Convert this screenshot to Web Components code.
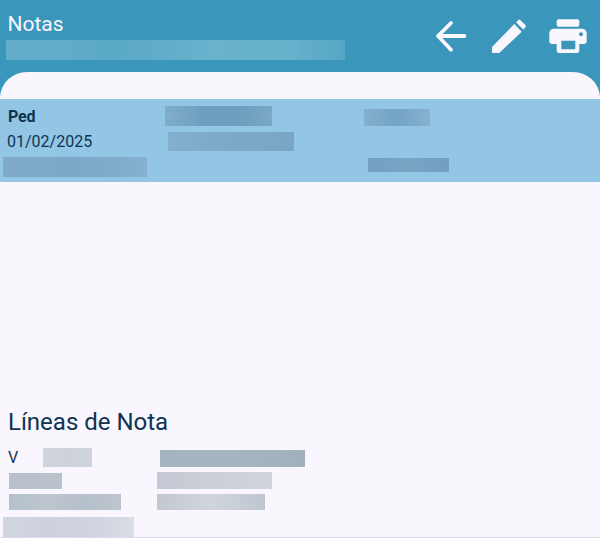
<!DOCTYPE html>
<html lang="es">
<head>
<meta charset="utf-8">
<title>Notas</title>
<style>
  html, body { margin: 0; height: 100%; }
  body { font-family: Roboto, "Liberation Sans", sans-serif; }
</style>
</head>
<body>
<notes-screen>
  <app-header slot="header" title="Notas"></app-header>

  <note-row>
    <row-line>
      <row-text strong style="width:157px;margin:7px 0 0 8px">Ped</row-text>
      <blur-bar w="107" h="20" fill="#82aeca,#6f9fc0,#6e9dbd,#7ba8c6" style="margin-top:7px"></blur-bar>
      <blur-bar w="66" h="17" fill="#84afce,#74a3c4,#87b1d0" style="margin:10px 0 0 92px"></blur-bar>
    </row-line>
    <row-line>
      <row-text style="width:161px;margin:5px 0 0 7px">01/02/2025</row-text>
      <blur-bar w="126" h="19" fill="#84afce,#7ca9c8,#7aa6c5" style="margin-top:6px"></blur-bar>
    </row-line>
    <row-line>
      <blur-bar w="144" h="20" fill="#7fabc9,#7ba8c6,#85b0cf" style="margin:5px 0 0 3px"></blur-bar>
      <blur-bar w="81" h="14" fill="#739fc1,#78a5c4,#729fc0" style="margin:6px 0 0 221px"></blur-bar>
    </row-line>
  </note-row>

  <note-lines slot="footer" title="Líneas de Nota">
    <row-line>
      <row-text style="width:35px;margin:-1px 0 0 8px">V</row-text>
      <blur-bar w="49" h="19" fill="#d0d5dd,#cdd2da,#d0d5dd"></blur-bar>
      <blur-bar w="145" h="17" fill="#a6b3c0,#a7b4c1,#a2afbd" style="margin:2px 0 0 68px"></blur-bar>
    </row-line>
    <row-line>
      <blur-bar w="53" h="16" fill="#b8c1cb,#bac2cc" style="margin:6px 0 0 9px"></blur-bar>
      <blur-bar w="115" h="17" fill="#c4c9d3,#cacfd8,#d0d5dc" style="margin:5px 0 0 95px"></blur-bar>
    </row-line>
    <row-line>
      <blur-bar w="112" h="16" fill="#b4c0ca,#bec6cf,#b6c0ca,#bec5cf" style="margin:5px 0 0 9px"></blur-bar>
      <blur-bar w="108" h="16" fill="#c2c7d1,#d0d5dd,#c0c6d0" style="margin:5px 0 0 36px"></blur-bar>
    </row-line>
    <row-line>
      <blur-bar w="131" h="20" fill="#d2d6e0,#ccd1db,#d0d4de,#dadce6" style="margin:6px 0 0 3px"></blur-bar>
    </row-line>
  </note-lines>
</notes-screen>

<script>
class NotesScreen extends HTMLElement {
  constructor() {
    super();
    this.attachShadow({ mode: "open" }).innerHTML = `
      <style>
        :host { display: flex; flex-direction: column; height: 538px; background: #3a96ba; color: #0e3451; overflow: hidden; }
        .sheet { flex: 1; display: flex; flex-direction: column; padding-top: 27px; background: #f9f6fe; border-radius: 27px 27px 0 0 / 26px 26px 0 0; }
        .spacer { flex: 1; }
      </style>
      <slot name="header"></slot>
      <div class="sheet">
        <slot></slot>
        <div class="spacer"></div>
        <slot name="footer"></slot>
      </div>
    `;
  }
}

class AppHeader extends HTMLElement {
  constructor() {
    super();
    this.attachShadow({ mode: "open" }).innerHTML = `
      <style>
        :host { display: flex; justify-content: space-between; height: 72px; color: #f9f6fe; }
        h1 { margin: 12px 0 0 7.5px; font: 400 21px/25px Roboto, sans-serif; }
        .subtitle { margin: 3px 0 0 6px; width: 339px; height: 20px; background: linear-gradient(90deg, #62aeca, #60adc9 18%, #5aa9c7 30%, #5fadc9 45%, #68b2cc 60%, #66b1cb 85%, #55a6c5); }
        .actions { display: flex; align-items: flex-start; padding: 19px 13px 0 0; }
        svg { display: block; fill: #f9f6fe; }
        .back { margin-right: 23px; fill: none; stroke: #f9f6fe; stroke-width: 3.8; stroke-linecap: round; stroke-linejoin: round; }
        .edit { margin-right: 22px; }
      </style>
      <div>
        <h1>${this.getAttribute("title")}</h1>
        <div class="subtitle"></div>
      </div>
      <div class="actions">
        <svg class="back" width="34" height="34" viewBox="434 19 34 34"><path d="M464.5 36H438M451 23 438 36 451 49.7"/></svg>
        <svg class="edit" width="36" height="34" viewBox="491 19 36 34">
          <path d="M492 47 514.3 24 521.7 31.7 499.3 53H493Q492 53 492 52Z"/>
          <path d="M516.2 22.4 518 20.2Q519.2 19 520.5 20.2L525.3 25Q526.5 26.2 525.3 27.4L523.3 29.6Z"/>
        </svg>
        <svg class="print" width="38" height="34" viewBox="549 19 38 34">
          <rect x="556.7" y="19.3" width="22.6" height="7.4" rx="2"/>
          <path fill-rule="evenodd" d="M554 28.7H582A4.7 4.7 0 0 1 586.7 33.4V41A3 3 0 0 1 583.7 44H579.3V50A3.3 3.3 0 0 1 576 53.3H560A3.3 3.3 0 0 1 556.7 50V44H552.3A3 3 0 0 1 549.3 41V33.4A4.7 4.7 0 0 1 554 28.7ZM561.3 40.7V49.3H575.3V40.7ZM581 32.3A2 2 0 1 0 581 36.3 2 2 0 1 0 581 32.3Z"/>
        </svg>
      </div>
    `;
  }
}

class NoteRow extends HTMLElement {
  constructor() {
    super();
    this.attachShadow({ mode: "open" }).innerHTML = `
      <style>
        :host { display: grid; grid-template-rows: 27px 26px 30px; background: #93c6e4; }
      </style>
      <slot></slot>
    `;
  }
}

class NoteLines extends HTMLElement {
  constructor() {
    super();
    this.attachShadow({ mode: "open" }).innerHTML = `
      <style>
        :host { display: block; border-bottom: 1px solid #e4d6ee; }
        h2 { margin: 0 0 12px 8px; font: 400 24px/28px Roboto, sans-serif; }
        .rows { display: grid; grid-template-rows: 19px 22px 22px 26px; }
      </style>
      <h2>${this.getAttribute("title")}</h2>
      <div class="rows"><slot></slot></div>
    `;
  }
}

class RowLine extends HTMLElement {
  constructor() {
    super();
    this.attachShadow({ mode: "open" }).innerHTML = `
      <style>
        :host { display: flex; align-items: flex-start; }
      </style>
      <slot></slot>
    `;
  }
}

class RowText extends HTMLElement {
  constructor() {
    super();
    this.attachShadow({ mode: "open" }).innerHTML = `
      <style>
        :host { display: block; font: 400 16px/22px Roboto, sans-serif; white-space: nowrap; }
        :host([strong]) { font-weight: 700; letter-spacing: -.2px; }
      </style>
      <slot></slot>
    `;
  }
}

// stand-in for the smudged out values in the screenshot
class BlurBar extends HTMLElement {
  constructor() {
    super();
    const stops = this.getAttribute("fill").split(",");
    const fill = stops.length > 1 ? `linear-gradient(90deg, ${stops.join(", ")})` : stops[0];
    this.attachShadow({ mode: "open" }).innerHTML = `
      <style>
        :host { display: block; flex: none; width: ${this.getAttribute("w")}px; height: ${this.getAttribute("h")}px; background: ${fill}; }
      </style>
    `;
  }
}

customElements.define("notes-screen", NotesScreen);
customElements.define("app-header", AppHeader);
customElements.define("note-row", NoteRow);
customElements.define("note-lines", NoteLines);
customElements.define("row-line", RowLine);
customElements.define("row-text", RowText);
customElements.define("blur-bar", BlurBar);
</script>
</body>
</html>
